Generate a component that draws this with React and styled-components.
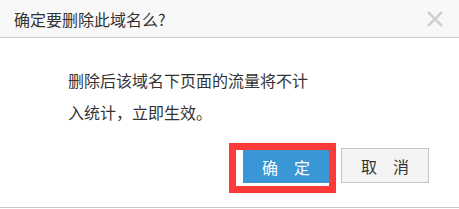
import styled, { createGlobalStyle } from "styled-components";

const GlobalStyle = createGlobalStyle`
  body {
    margin: 0;
    background: #ffffff;
    font-family: "Liberation Sans", "Noto Sans CJK SC", sans-serif;
  }
`;

const Dialog = styled.div`
  width: 459px;
  background: #fff;
  border-bottom: 1px solid #c8c8c8;
`;

const Header = styled.div`
  height: 37px;
  background: #f8f8f8;
  border-bottom: 1px solid #cccccc;
  display: flex;
  align-items: center;
  justify-content: space-between;
  padding: 0 16px 0 14px;
`;

const Title = styled.div`
  font-size: 16px;
  color: #333;
  font-family: "Noto Sans CJK SC", sans-serif;
`;

const Close = styled.button`
  border: none;
  background: none;
  padding: 0;
  width: 16px;
  height: 16px;
  display: flex;
  cursor: pointer;
`;

const Body = styled.div`
  padding: 26px 30px 14px 68px;
`;

const Message = styled.p`
  margin: 0;
  width: 242px;
  font-size: 16px;
  line-height: 32px;
  color: #333;
  font-family: "Noto Sans CJK SC", sans-serif;
`;

const Actions = styled.div`
  margin-top: 15px;
  display: flex;
  justify-content: flex-end;
  align-items: flex-start;
  gap: 5px;
`;

const Highlight = styled.div`
  border: 7px solid #fd3a3a;
  padding: 0 0 3px 7px;
  background: #fff;
`;

const Button = styled.button`
  width: ${(p) => (p.$primary ? "86px" : "88px")};
  height: ${(p) => (p.$primary ? "33px" : "35px")};
  margin-top: ${(p) => (p.$primary ? "0" : "5px")};
  border: ${(p) => (p.$primary ? "none" : "1px solid #c4c4c4")};
  background: ${(p) => (p.$primary ? "#3a97d6" : "#f4f4f4")};
  color: ${(p) => (p.$primary ? "#fff" : "#333")};
  font-size: 16px;
  font-family: "Noto Sans CJK SC", sans-serif;
  padding: 0;
  display: block;
  cursor: pointer;
`;

export default function App() {
  return (
    <>
      <GlobalStyle />
      <Dialog>
        <Header>
          <Title>确定要删除此域名么?</Title>
          <Close aria-label="close">
            <svg width="16" height="16" viewBox="0 0 16 16">
              <path d="M1 1 L15 15 M15 1 L1 15" stroke="#d0d0d0" strokeWidth="2.6" />
            </svg>
          </Close>
        </Header>
        <Body>
          <Message>删除后该域名下页面的流量将不计入统计，立即生效。</Message>
          <Actions>
            <Highlight>
              <Button $primary>确　定</Button>
            </Highlight>
            <Button>取　消</Button>
          </Actions>
        </Body>
      </Dialog>
    </>
  );
}
